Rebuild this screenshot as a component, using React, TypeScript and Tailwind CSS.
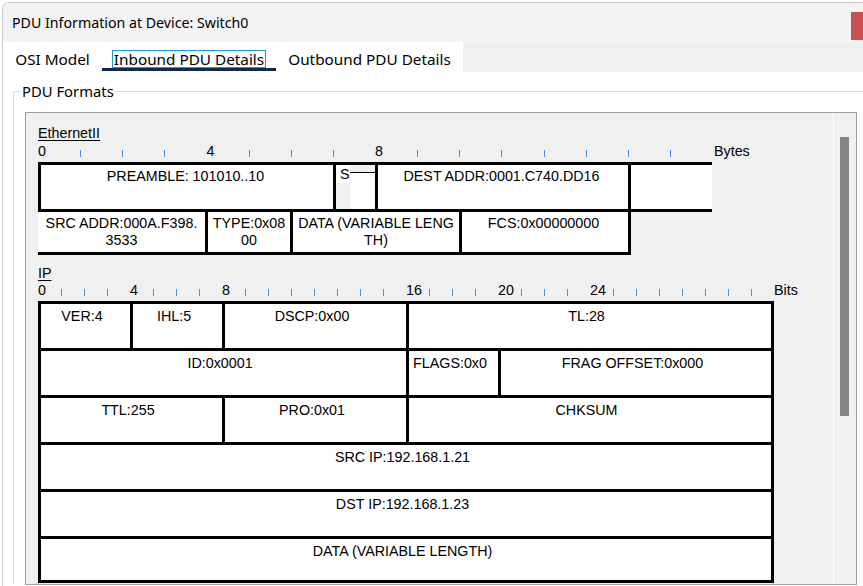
import React from 'react';

const TICK = 'mt-[7px] h-[7px] w-px bg-[#4a8fd4]';

interface RulerProps {
  count: number;
  colClass: string;
  labels: number[];
  unit: string;
  unitClass?: string;
}

// ruler above a header drawing: a label on some columns, a blue tick on the rest
const Ruler: React.FC<RulerProps> = ({ count, colClass, labels, unit, unitClass = '' }) => (
  <div className="flex h-[19px] leading-[16px]">
    {Array.from({ length: count }, (_, i) => (
      <div key={i} className={`shrink-0 ${colClass}`}>
        {labels.includes(i) ? <span>{i}</span> : <div className={TICK} />}
      </div>
    ))}
    <span className={unitClass}>{unit}</span>
  </div>
);

const Cell: React.FC<{ className: string; children?: React.ReactNode }> = ({ className, children }) => (
  <div className={`shrink-0 border-black bg-white text-center leading-[17px] ${className}`}>{children}</div>
);

const IP_ROWS: { label: string; w: string }[][] = [
  [
    { label: 'VER:4', w: 'w-[92px]' },
    { label: 'IHL:5', w: 'w-[92px]' },
    { label: 'DSCP:0x00', w: 'w-[184px]' },
    { label: 'TL:28', w: 'w-[368px]' },
  ],
  [
    { label: 'ID:0x0001', w: 'w-[368px]' },
    { label: 'FLAGS:0x0', w: 'w-[92px]' },
    { label: 'FRAG OFFSET:0x000', w: 'w-[276px]' },
  ],
  [
    { label: 'TTL:255', w: 'w-[184px]' },
    { label: 'PRO:0x01', w: 'w-[184px]' },
    { label: 'CHKSUM', w: 'w-[368px]' },
  ],
  [{ label: 'SRC IP:192.168.1.21', w: 'w-[736px]' }],
  [{ label: 'DST IP:192.168.1.23', w: 'w-[736px]' }],
  [{ label: 'DATA (VARIABLE LENGTH)', w: 'w-[736px]' }],
];

export default function App() {
  return (
    <div className="h-[586px] w-[863px] overflow-hidden bg-white font-['Noto_Sans',sans-serif] text-black">
      <div className="ml-[2px] mt-[2px] flex h-[584px] flex-col overflow-hidden rounded-tl-[7px] border-l border-t border-[#cccccc]">
        {/* title bar */}
        <div className="flex h-[39px] shrink-0 items-start bg-[#f3f3f3]">
          <div className="flex-1 pl-[9px] pt-[10px] text-[14.2px] leading-[19px]">PDU Information at Device: Switch0</div>
          <div className="mt-[9px] h-[28px] w-[12px] bg-[#c75050]" />
        </div>

        {/* tabs */}
        <div className="flex h-[30px] shrink-0 bg-[#f0f0f0] text-[15.3px] leading-[16px]">
          <div className="flex bg-white">
            <div className="flex w-[99px] justify-center pt-[9px]">OSI Model</div>
            <div className="flex w-[174px] flex-col">
              <div className="flex flex-1 justify-center pt-[8px]">
                <span className="h-[18px] border border-[#1e9bd7] px-px">Inbound PDU Details</span>
              </div>
              <div className="h-[3px] bg-[#13294b]" />
              <div className="h-px" />
            </div>
            <div className="flex w-[187px] justify-center pt-[9px]">Outbound PDU Details</div>
          </div>
        </div>

        {/* body */}
        <div className="flex-1 bg-white pl-[10px] pt-[10px]">
          <fieldset className="border-l border-t border-[#dcdcdc]">
            <legend className="ml-[7px] px-px text-[14.8px] leading-[18px]">PDU Formats</legend>
            <div className="ml-[11px] mt-[12px] flex h-[473px] w-[832px] overflow-hidden border border-[#a0a0a0] bg-[#f0f0f0]">
              <div className="flex-1 pl-[12px] pt-[12px] font-['Liberation_Sans',Arial,sans-serif] text-[14.3px]">
                {/* Ethernet II */}
                <div className="leading-[16px]">
                  <span className="underline underline-offset-[2px]">EthernetII</span>
                </div>
                <div className="mt-[2px]">
                  <Ruler count={16} colClass="w-[42.125px]" labels={[0, 4, 8]} unit="Bytes" unitClass="ml-[2px]" />
                </div>
                <div className="flex h-[47px] w-[674px] border-t-[3px] border-black">
                  <Cell className="w-[295px] border-l-[3px] pr-[3px] pt-[3px]">PREAMBLE: 101010..10</Cell>
                  <div className="flex w-[42px] shrink-0 border-l-[3px] border-black bg-white">
                    <div className="flex w-[14px] flex-col">
                      <div className="h-[18px] pl-[4px] pt-[1px] leading-[17px]">S</div>
                      <div className="flex-1 bg-[#f0f0f0]" />
                    </div>
                    <div className="flex flex-1 flex-col">
                      <div className="h-[8px] border-b border-black bg-[#f0f0f0]" />
                      <div className="flex-1" />
                    </div>
                  </div>
                  <Cell className="w-[253px] border-l-[3px] pr-[3px] pt-[3px]">DEST ADDR:0001.C740.DD16</Cell>
                  <Cell className="w-[84px] border-l-[3px]" />
                </div>
                <div className="flex w-[674px] border-t-[3px] border-black">
                  <Cell className="h-[43px] w-[167px] border-b-[3px] pt-[3px]">
                    SRC ADDR:000A.F398.
                    <br />
                    3533
                  </Cell>
                  <Cell className="h-[43px] w-[85px] border-b-[3px] border-l-[3px] pt-[3px]">
                    TYPE:0x08
                    <br />
                    00
                  </Cell>
                  <Cell className="h-[43px] w-[169px] border-b-[3px] border-l-[3px] pt-[3px]">
                    DATA (VARIABLE LENG
                    <br />
                    TH)
                  </Cell>
                  <Cell className="h-[43px] w-[172px] border-x-[3px] border-b-[3px] pr-[3px] pt-[3px]">FCS:0x00000000</Cell>
                </div>

                {/* IP */}
                <div className="mt-[10px] leading-[16px]">
                  <span className="underline underline-offset-[2px]">IP</span>
                </div>
                <div className="mt-px">
                  <Ruler count={32} colClass="w-[23px]" labels={[0, 4, 8, 16, 20, 24]} unit="Bits" />
                </div>
                {IP_ROWS.map((row, ri) => (
                  <div
                    key={ri}
                    className={`flex h-[47px] w-[736px] border-t-[3px] border-black ${ri === IP_ROWS.length - 1 ? 'border-b-[3px]' : ''}`}
                  >
                    {row.map((c, ci) => (
                      <Cell
                        key={c.label}
                        className={`${c.w} border-l-[3px] pr-[7px] pt-[4px] ${ci === row.length - 1 ? 'border-r-[3px]' : ''}`}
                      >
                        {c.label}
                      </Cell>
                    ))}
                  </div>
                ))}
              </div>

              {/* scrollbar */}
              <div className="w-[23px] shrink-0 border-l border-white pl-[6px] pt-[24px]">
                <div className="h-[279px] w-[9px] bg-[#858585]" />
              </div>
            </div>
          </fieldset>
        </div>
      </div>
    </div>
  );
}
